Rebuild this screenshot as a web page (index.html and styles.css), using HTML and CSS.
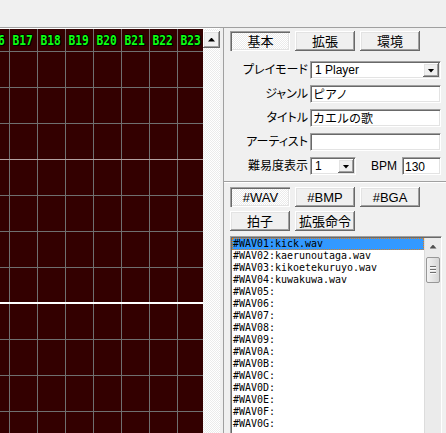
FILE: index.html
```html
<!DOCTYPE html>
<html lang="ja">
<head>
<meta charset="utf-8">
<title>BMS Editor</title>
<link rel="stylesheet" href="styles.css">
</head>
<body>
<div class="top"></div>
<div class="main">
  <div class="left">
    <div class="grid">
      <div class="ghead">
        <div class="cols">
          <span><b>B16</b></span><span><b>B17</b></span><span><b>B18</b></span><span><b>B19</b></span><span><b>B20</b></span><span><b>B21</b></span><span><b>B22</b></span><span><b>B23</b></span>
        </div>
      </div>
      <div class="gbody"></div>
    </div>
    <div class="vscroll">
      <div class="sbtn"><i class="tri-up"></i></div>
    </div>
  </div>
  <div class="right">
    <div class="btnrow">
      <div class="btn pressed">基本</div>
      <div class="btn">拡張</div>
      <div class="btn">環境</div>
    </div>
    <div class="form">
      <div class="lbl">プレイモード</div>
      <div class="combo"><span class="ctext">1 Player</span><div class="dd"><i class="tri-down"></i></div></div>
      <div class="lbl">ジャンル</div>
      <div class="field">ピアノ</div>
      <div class="lbl">タイトル</div>
      <div class="field">カエルの歌</div>
      <div class="lbl">アーティスト</div>
      <div class="field"></div>
      <div class="lbl">難易度表示</div>
      <div class="row5">
        <div class="combo small"><span class="ctext">1</span><div class="dd"><i class="tri-down"></i></div></div>
        <div class="bpm">BPM</div>
        <div class="field bpmf">130</div>
      </div>
    </div>
    <div class="sep"></div>
    <div class="btnrow r2">
      <div class="btn pressed">#WAV</div>
      <div class="btn">#BMP</div>
      <div class="btn">#BGA</div>
    </div>
    <div class="btnrow r3">
      <div class="btn">拍子</div>
      <div class="btn">拡張命令</div>
    </div>
    <div class="list">
      <div class="items">
        <div class="item sel"><span>#WAV01:kick.wav</span></div>
        <div class="item"><span>#WAV02:kaerunoutaga.wav</span></div>
        <div class="item"><span>#WAV03:kikoetekuruyo.wav</span></div>
        <div class="item"><span>#WAV04:kuwakuwa.wav</span></div>
        <div class="item"><span>#WAV05:</span></div>
        <div class="item"><span>#WAV06:</span></div>
        <div class="item"><span>#WAV07:</span></div>
        <div class="item"><span>#WAV08:</span></div>
        <div class="item"><span>#WAV09:</span></div>
        <div class="item"><span>#WAV0A:</span></div>
        <div class="item"><span>#WAV0B:</span></div>
        <div class="item"><span>#WAV0C:</span></div>
        <div class="item"><span>#WAV0D:</span></div>
        <div class="item"><span>#WAV0E:</span></div>
        <div class="item"><span>#WAV0F:</span></div>
        <div class="item"><span>#WAV0G:</span></div>
      </div>
      <div class="lscroll">
        <div class="larrow"><i class="tri-sm"></i></div>
        <div class="thumb"><i></i><i></i><i></i></div>
      </div>
    </div>
  </div>
</div>
</body>
</html>
```
FILE: styles.css
```css
html, body {
  margin: 0;
  height: 100%;
  overflow: hidden;
}
body {
  background: #f0f0f0;
  font-family: "Liberation Sans", "Noto Sans CJK JP", sans-serif;
  font-size: 12px;
  color: #000;
}
.top {
  height: 27px;
}
.main {
  display: flex;
  border-top: 1px solid #a0a0a0;
  height: 410px;
}
.left {
  display: flex;
  width: 220px;
  flex: none;
  border-top: 1px solid #ffffff;
}
.grid {
  width: 203px;
  display: flex;
  flex-direction: column;
  overflow: hidden;
  background:
    repeating-linear-gradient(to right, transparent 0 9px, #6f6f6f 9px 10px, transparent 10px 28px),
    #330000;
}
.ghead {
  height: 22px;
  border-bottom: 1px solid #6f6f6f;
  flex: none;
}
.cols {
  display: flex;
  margin-left: -19px;
  height: 22px;
  align-items: center;
}
.cols span {
  flex: none;
  width: 28px;
  display: flex;
  justify-content: center;
  line-height: 15px;
}
.cols b {
  display: inline-block;
  font-family: "DejaVu Sans Mono", monospace;
  font-weight: bold;
  font-size: 14px;
  color: #10ff10;
  transform: scaleX(0.8);
  text-shadow: 1px 0 0 #000, -1px 0 0 #000, 0 1px 0 #000, 0 -1px 0 #000, 1px 1px 0 #000;
}
.gbody {
  flex: 1;
  background:
    linear-gradient(#ffffff, #ffffff) 0 250px / 100% 2px no-repeat,
    linear-gradient(#b3a0a0, #b3a0a0) 0 107px / 100% 1px no-repeat,
    repeating-linear-gradient(to bottom, transparent 0 35px, #6f6f6f 35px 36px);
}
.vscroll {
  width: 17px;
  flex: none;
  background: repeating-conic-gradient(#ffffff 0 25%, #ebebeb 0 50%) 0 0 / 2px 2px;
}
.sbtn {
  margin-top: 2px;
  width: 17px;
  height: 17px;
  box-sizing: border-box;
  background: #f0f0f0;
  box-shadow: inset -1px -1px #696969, inset 1px 1px #ffffff, inset -2px -2px #a0a0a0, inset 2px 2px #e3e3e3;
  display: flex;
  align-items: center;
  justify-content: center;
}
.tri-up {
  display: block;
  width: 7px;
  height: 4px;
  background: #000;
  clip-path: polygon(50% 0, 100% 100%, 0 100%);
}
.tri-down {
  display: block;
  width: 7px;
  height: 4px;
  background: #000;
  clip-path: polygon(0 0, 100% 0, 50% 100%);
}
.right {
  flex: 1;
  margin-left: 3px;
  border-left: 1px solid #a0a0a0;
  padding: 3px 0 0 6px;
  min-width: 0;
}
.btnrow {
  display: flex;
  gap: 5px;
}
.btnrow.r2 {
  margin-top: 4px;
}
.btnrow.r3 {
  margin-top: 4px;
}
.btn {
  width: 60px;
  height: 20px;
  box-sizing: border-box;
  display: flex;
  align-items: center;
  justify-content: center;
  background: #f0f0f0;
  box-shadow: inset -1px -1px #696969, inset 1px 1px #ffffff, inset -2px -2px #a0a0a0, inset 2px 2px #e3e3e3;
  line-height: 14px;
  font-size: 13px;
  padding-top: 1px;
}
.btn.pressed {
  background: repeating-conic-gradient(#ffffff 0 25%, #ebebeb 0 50%) 0 0 / 2px 2px;
  box-shadow: inset 1px 1px #a0a0a0, inset 2px 2px #696969, inset -1px -1px #ffffff, inset -2px -2px #e3e3e3;
  padding-top: 2px;
  padding-left: 1px;
}
.form {
  display: grid;
  grid-template-columns: 78px 131px;
  column-gap: 2px;
  row-gap: 6px;
  margin-top: 10px;
  align-items: center;
}
.lbl {
  text-align: right;
  line-height: 14px;
  font-size: 12px;
  font-feature-settings: "palt";
  white-space: nowrap;
}
.field, .combo {
  height: 18px;
  box-sizing: border-box;
  background: #ffffff;
  border-top: 1px solid #a0a0a0;
  border-left: 1px solid #a0a0a0;
  border-bottom: 1px solid #ffffff;
  border-right: 1px solid #ffffff;
  box-shadow: inset 1px 1px #696969, inset -1px -1px #e3e3e3;
  line-height: 14px;
  padding: 2px 0 0 2px;
  white-space: nowrap;
  overflow: hidden;
}
.combo {
  display: flex;
  align-items: center;
  padding: 0 1px 0 4px;
}
.ctext {
  flex: 1;
  line-height: 14px;
}
.dd {
  width: 16px;
  height: 14px;
  box-sizing: border-box;
  background: #f0f0f0;
  box-shadow: inset -1px -1px #696969, inset 1px 1px #ffffff, inset -2px -2px #a0a0a0, inset 2px 2px #e3e3e3;
  display: flex;
  align-items: center;
  justify-content: center;
  padding-top: 1px;
}
.row5 {
  display: flex;
  align-items: center;
}
.combo.small {
  width: 46px;
}
.bpm {
  margin-left: 15px;
  width: 31px;
  line-height: 14px;
}
.bpmf {
  width: 39px;
}
.sep {
  margin: 6px 0 0 -6px;
  border-top: 1px solid #a0a0a0;
  border-bottom: 1px solid #ffffff;
}
.list {
  margin-top: 5px;
  width: 212px;
  height: 210px;
  box-sizing: border-box;
  display: flex;
  background: #ffffff;
  border-top: 1px solid #a0a0a0;
  border-left: 1px solid #a0a0a0;
  border-bottom: 1px solid #ffffff;
  border-right: 1px solid #ffffff;
  box-shadow: inset 1px 1px #696969, inset -1px -1px #e3e3e3;
  padding: 1px 0 0 1px;
}
.items {
  flex: 1;
  overflow: hidden;
}
.item {
  height: 12px;
  line-height: 12px;
  white-space: nowrap;
  box-sizing: border-box;
}
.item span {
  display: inline-block;
  font-family: "DejaVu Sans Mono", monospace;
  font-size: 11px;
  transform: scaleX(0.906);
  transform-origin: 0 50%;
  padding-left: 1px;
  line-height: 12px;
  vertical-align: top;
}
.item.sel {
  background: #3399ff;
  outline: 1px dotted #e0801a;
  outline-offset: -1px;
}
.lscroll {
  width: 17px;
  flex: none;
  background: #ebebeb;
  border-left: 1px solid #dcdcdc;
  box-sizing: border-box;
}
.larrow {
  height: 17px;
  display: flex;
  align-items: center;
  justify-content: center;
}
.tri-sm {
  display: block;
  width: 7px;
  height: 4px;
  background: #505050;
  clip-path: polygon(50% 0, 100% 100%, 0 100%);
}
.thumb {
  margin: 2px 0 0 1px;
  width: 14px;
  height: 26px;
  box-sizing: border-box;
  border: 1px solid #979797;
  border-radius: 2px;
  background: linear-gradient(to right, #f3f3f3, #e4e4e4 50%, #d6d6d6);
  display: flex;
  flex-direction: column;
  align-items: center;
  justify-content: center;
  gap: 1px;
}
.thumb i {
  display: block;
  width: 6px;
  height: 1px;
  background: #6e6e6e;
  border-bottom: 1px solid #fafafa;
}
```
